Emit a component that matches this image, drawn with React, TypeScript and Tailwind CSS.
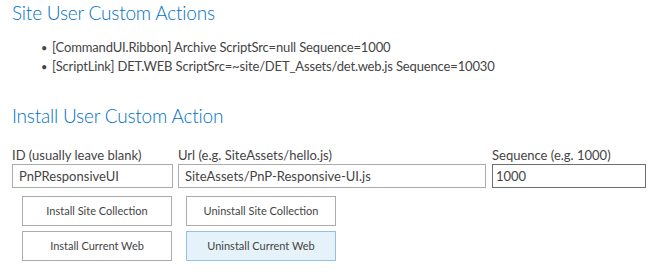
import { useState } from "react";

const actions = [
  "[CommandUI.Ribbon] Archive ScriptSrc=null Sequence=1000",
  "[ScriptLink] DET.WEB ScriptSrc=~site/DET_Assets/det.web.js Sequence=10030",
];

function ActionButton({ label, active }: { label: string; active?: boolean }) {
  return (
    <button
      className={`w-[150px] h-[30px] border text-[11px] text-[#444] ${
        active ? "bg-[#e6f2fa] border-[#92c0e0]" : "bg-white border-[#ababab]"
      }`}
    >
      {label}
    </button>
  );
}

export default function App() {
  const [id, setId] = useState("PnPResponsiveUI");
  const [url, setUrl] = useState("SiteAssets/PnP-Responsive-UI.js");
  const [seq, setSeq] = useState("1000");

  return (
    <div className="w-[665px] h-[275px] bg-white px-3 font-['Lato','Open_Sans',sans-serif] text-[13px] text-[#444]">
      <h2 className="text-[19px] leading-[26px] font-light text-[#0072c6] tracking-[-0.2px]">Site User Custom Actions</h2>

      <ul className="mt-3 pl-[29px]">
        {actions.map((a) => (
          <li key={a} className="flex leading-[19px]">
            <span className="w-[11px] shrink-0 text-[11px]">•</span>
            <span className="tracking-[-0.15px]">{a}</span>
          </li>
        ))}
      </ul>

      <h2 className="mt-[27px] text-[19px] leading-[26px] font-light text-[#0072c6] tracking-[-0.2px]">Install User Custom Action</h2>

      {/* Inputs */}
      <div className="mt-[18px] flex">
        <div className="w-[161px] flex flex-col">
          <label className="leading-[17px]">ID (usually leave blank)</label>
          <input
            value={id}
            onChange={(e) => setId(e.target.value)}
            className="h-6 border border-[#ababab] px-[6px] text-[13px] outline-none"
          />
        </div>
        <div className="ml-[5px] w-[308px] flex flex-col">
          <label className="leading-[17px]">Url (e.g. SiteAssets/hello.js)</label>
          <input
            value={url}
            onChange={(e) => setUrl(e.target.value)}
            className="h-6 border border-[#ababab] px-[6px] text-[13px] outline-none"
          />
        </div>
        <div className="ml-[6px] w-[154px] flex flex-col">
          <label className="leading-[17px]">Sequence (e.g. 1000)</label>
          <input
            value={seq}
            onChange={(e) => setSeq(e.target.value)}
            className="h-6 border border-[#6e6e6e] px-[3px] text-[13px] outline-none"
          />
        </div>
      </div>

      {/* Buttons */}
      <div className="mt-2 ml-[10px] grid grid-cols-[150px_150px] gap-x-[14px] gap-y-[5px]">
        <ActionButton label="Install Site Collection" />
        <ActionButton label="Uninstall Site Collection" />
        <ActionButton label="Install Current Web" />
        <ActionButton label="Uninstall Current Web" active />
      </div>
    </div>
  );
}
